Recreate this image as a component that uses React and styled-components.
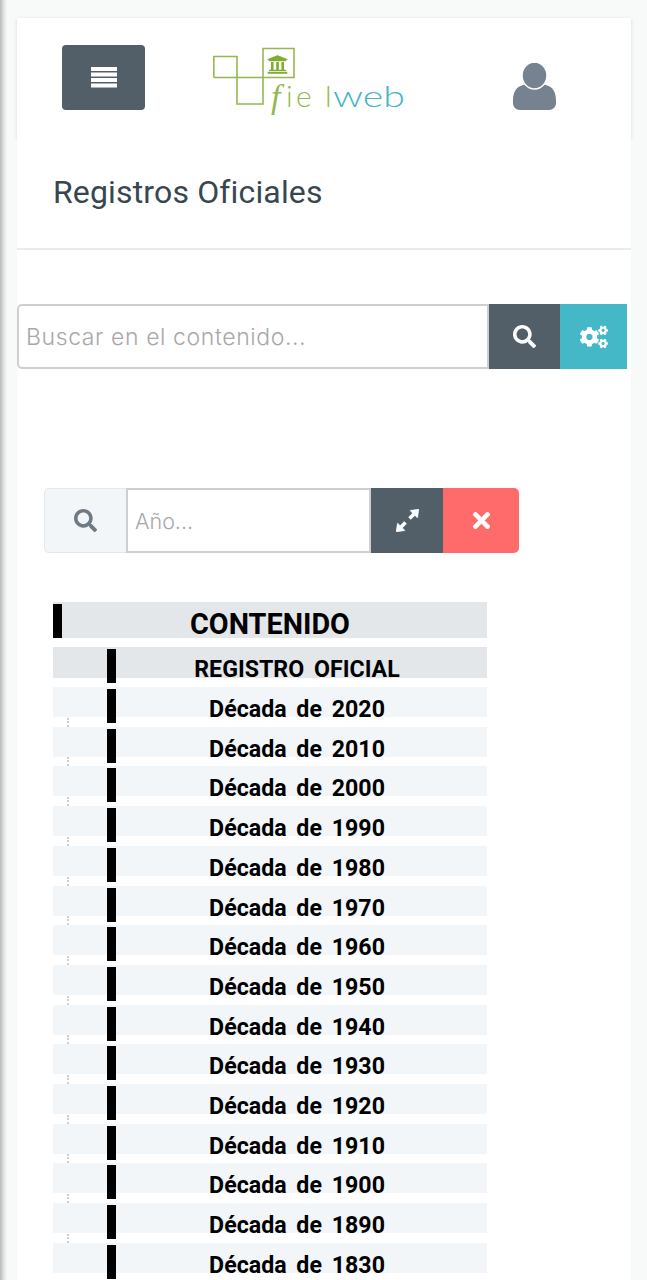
import React from "react";
import styled, { createGlobalStyle } from "styled-components";
import { FaCogs, FaSearch, FaTimes, FaUniversity } from "react-icons/fa";

const GlobalStyle = createGlobalStyle`
  html, body {
    margin: 0;
    height: 1280px;
    overflow: hidden;
    font-family: Roboto, "Liberation Sans", sans-serif;
  }
  * {
    box-sizing: border-box;
  }
`;

const Page = styled.div`
  height: 1280px;
  overflow: hidden;
  padding: 18px 16px 0 17px;
  background: linear-gradient(to right, #b9b9b9, #e4e4e4 4px, #f8f9f9 7px);
`;

const Header = styled.header`
  height: 120px;
  display: flex;
  align-items: flex-start;
  padding: 27px 0 0 45px;
  background: #fff;
  box-shadow: 0 1px 4px rgba(0, 0, 0, 0.12);
`;

const MenuButton = styled.button`
  width: 83px;
  height: 65px;
  display: flex;
  align-items: center;
  justify-content: center;
  border: 0;
  border-radius: 4px;
  background: #525f69;
`;

const LogoMark = styled.svg`
  width: 196px;
  height: 72px;
  margin: 1px 0 0 67px;
  flex: none;
`;

const UserMark = styled.svg`
  width: 43px;
  height: 47px;
  margin: 18px 0 0 105px;
  flex: none;
`;

const Panel = styled.main`
  position: relative;
  height: 1143px;
  background: #fff;
`;

const TitleBar = styled.div`
  height: 112px;
  padding: 35px 0 0 36px;
  border-bottom: 2px solid #e9ecec;
`;

const Title = styled.h1`
  margin: 0;
  font-size: 32px;
  line-height: 38px;
  font-weight: 400;
  letter-spacing: 0.15px;
  color: #37474f;
`;

const SearchGroup = styled.div`
  display: flex;
  height: 65px;
  margin-top: ${({ $top }) => $top}px;
  margin-left: ${({ $left }) => $left}px;
  width: ${({ $width }) => $width}px;
`;

const Field = styled.input`
  flex: 1;
  min-width: 0;
  height: 100%;
  padding: 0 7px;
  border: 2px solid #cfcfcf;
  border-radius: ${({ $rounded }) => ($rounded ? "5px 0 0 5px" : "0")};
  outline: 0;
  background: #fff;
  font-family: Inter, sans-serif;
  font-size: ${({ $size }) => $size}px;
  font-weight: 300;
  letter-spacing: ${({ $spacing }) => $spacing}px;
  &::placeholder {
    color: #a8a8a8;
    opacity: 1;
  }
`;

const Addon = styled.div`
  width: 82px;
  display: flex;
  align-items: center;
  justify-content: center;
  border: 1px solid #e4e8ec;
  border-right: 0;
  border-radius: 5px 0 0 5px;
  background: #f3f6f9;
  color: #6f7a83;
  font-size: 23px;
`;

const IconButton = styled.button`
  width: ${({ $width }) => $width}px;
  flex: none;
  display: flex;
  align-items: center;
  justify-content: center;
  padding: 0;
  border: 0;
  border-radius: ${({ $end }) => ($end ? "0 5px 5px 0" : "0")};
  background: ${({ $bg }) => $bg};
  color: #fff;
  font-size: ${({ $size }) => $size || 23}px;
`;

const Tree = styled.section`
  width: 434px;
  margin: 49px 0 0 36px;
`;

const RootRow = styled.div`
  height: 45px;
  background: linear-gradient(#e3e7e9, #e3e7e9) no-repeat top / 100% 36px;
  padding-top: 2px;
`;

const RootLabel = styled.div`
  height: 34px;
  border-left: 9px solid #000;
  padding: 3px 9px 0 0;
  text-align: center;
  font-size: 28.8px;
  line-height: 34px;
  font-weight: 700;
  color: #000;
`;

const Row = styled.div`
  height: ${({ $head }) => ($head ? "40px" : "39.71px")};
  display: flex;
  padding-top: 2px;
  background: linear-gradient(${({ $bg }) => $bg}, ${({ $bg }) => $bg}) no-repeat top / 100% ${({ $head }) => ($head ? "31px" : "30px")};
`;

const Indent = styled.div`
  width: 54px;
  flex: none;
  align-self: stretch;
  display: flex;
  align-items: flex-end;
  padding-left: 14px;
`;

const Dots = styled.span`
  width: 2px;
  height: 9px;
  border-left: 2px dotted #cfcfcf;
`;

const Label = styled.div`
  flex: 1;
  height: 34px;
  padding: 5px 9px 0 0;
  border-left: 9px solid #000;
  text-align: center;
  font-size: 23.2px;
  line-height: 30px;
  font-weight: 700;
  word-spacing: 4px;
  color: #000;
`;

const decades = [2020, 2010, 2000, 1990, 1980, 1970, 1960, 1950, 1940, 1930, 1920, 1910, 1900, 1890, 1830];

const Logo = () => (
  <LogoMark viewBox="212 46 196 72" fill="none">
    <path d="M213.800 77.500V56.500H237V104H263V48.500H294V77.500H213.800" stroke="#94b850" strokeWidth="1.600" />
    <FaUniversity x="267" y="54" size={21} color="#7fae2e" />
    <text x="271" y="108" fontFamily="Liberation Serif, serif" fontStyle="italic" fontSize="34" fill="#94b850">
      f
    </text>
    <text x="286 296 325" y="107" fontFamily="Lato, sans-serif" fontWeight="300" fontSize="30" fill="#94b850">
      iel
    </text>
    <text x="333" y="107" fontFamily="Lato, sans-serif" fontWeight="300" fontSize="30" textLength="72" lengthAdjust="spacingAndGlyphs" fill="#45b4c6">
      web
    </text>
  </LogoMark>
);

const User = () => (
  <UserMark viewBox="0 0 43 47" fill="#76828f">
    <path d="M0 38C0 29 3 24 10 22c3-1 6 1 11.500 1s8.500-2 11.500-1c7 2 10 7 10 16v2c0 4-3 7-7 7H7c-4 0-7-3-7-7z" />
    <ellipse cx="21.500" cy="12.500" rx="12.500" ry="13.500" stroke="#fff" strokeWidth="1.500" />
  </UserMark>
);

const MenuBars = () => (
  <svg width="26" height="21" viewBox="0 0 26 21" fill="#fff">
    <rect y="0" width="26" height="4" />
    <rect y="5.500" width="26" height="4" />
    <rect y="11" width="26" height="4" />
    <rect y="16.500" width="26" height="4" />
  </svg>
);

const ExpandIcon = () => (
  <svg width="23" height="23" viewBox="0 0 23 23" fill="#fff" stroke="#fff">
    <path d="M23 0L14 1.500L21.500 9z" strokeWidth="0.500" />
    <path d="M18 5L13.500 9.500" strokeWidth="3.500" />
    <path d="M0 23L1.500 14L9 21.500z" strokeWidth="0.500" />
    <path d="M5 18L9.500 13.500" strokeWidth="3.500" />
  </svg>
);

export default function App() {
  return (
    <>
      <GlobalStyle />
      <Page>
        <Header>
          <MenuButton aria-label="Menú">
            <MenuBars />
          </MenuButton>
          <Logo />
          <User />
        </Header>
        <Panel>
          <TitleBar>
            <Title>Registros Oficiales</Title>
          </TitleBar>
          <SearchGroup $top={54} $left={0} $width={610}>
            <Field $rounded $size={23} $spacing={0.6} placeholder="Buscar en el contenido..." />
            <IconButton $width={71} $bg="#525f69">
              <FaSearch />
            </IconButton>
            <IconButton $width={67} $bg="#45b8c8" $size={28}>
              <FaCogs />
            </IconButton>
          </SearchGroup>
          <SearchGroup $top={119} $left={27} $width={475}>
            <Addon>
              <FaSearch />
            </Addon>
            <Field $size={21.5} $spacing={0} placeholder="Año..." />
            <IconButton $width={72} $bg="#525f69">
              <ExpandIcon />
            </IconButton>
            <IconButton $width={76} $bg="#ff6b6b" $end $size={25}>
              <FaTimes />
            </IconButton>
          </SearchGroup>
          <Tree>
            <RootRow>
              <RootLabel>CONTENIDO</RootLabel>
            </RootRow>
            <Row $head $bg="#e3e7e9">
              <Indent />
              <Label>REGISTRO OFICIAL</Label>
            </Row>
            {decades.map((decade, index) => (
              <Row key={decade} $bg="#f3f6f9">
                <Indent>{index < decades.length - 1 && <Dots />}</Indent>
                <Label>Década de {decade}</Label>
              </Row>
            ))}
          </Tree>
        </Panel>
      </Page>
    </>
  );
}
